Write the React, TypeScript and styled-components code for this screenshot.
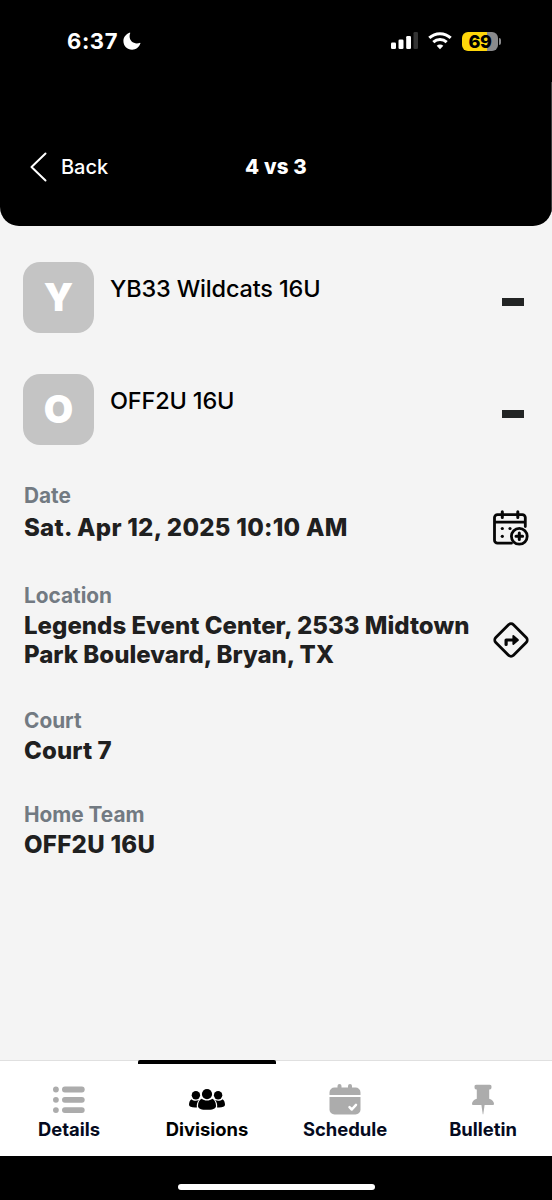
import React from "react";
import styled, { createGlobalStyle } from "styled-components";

const GlobalStyle = createGlobalStyle`
  * { box-sizing: border-box; }
  body { margin: 0; background: #f4f4f4; }
`;

const Screen = styled.div`
  width: 552px;
  height: 1200px;
  display: flex;
  flex-direction: column;
  background: #f4f4f4;
  overflow: hidden;
  font-family: Inter, "Liberation Sans", sans-serif;
  color: #000;
`;

const Header = styled.header`
  height: 226px;
  background: #000;
  color: #fff;
  border-radius: 0 0 19px 19px;
  overflow: hidden;
  display: flex;
  flex-direction: column;
`;

const StatusBar = styled.div`
  height: 82px;
  padding: 0 51px 0 67px;
  display: flex;
  align-items: center;
  justify-content: space-between;
`;

const StatusGroup = styled.div<{ $gap: number }>`
  display: flex;
  align-items: center;
  gap: ${(p) => p.$gap}px;
`;

const Clock = styled.span`
  font-size: 22px;
  font-weight: 700;
  line-height: 26px;
  letter-spacing: 0.6px;
`;

const Battery = styled.div`
  display: flex;
  align-items: center;
  gap: 1px;
`;

const BatteryBody = styled.div<{ $level: number }>`
  width: 36px;
  height: 19px;
  border-radius: 6px;
  background: linear-gradient(90deg, #ffd60a ${(p) => p.$level}%, #8a8a8c ${(p) => p.$level}%);
  color: #000;
  font-size: 18px;
  font-weight: 800;
  line-height: 19px;
  letter-spacing: -0.4px;
  text-align: center;
`;

const BatteryTip = styled.div`
  width: 2px;
  height: 7px;
  border-radius: 0 2px 2px 0;
  background: #8a8a8c;
`;

const NavBar = styled.nav`
  height: 144px;
  padding: 26px 28px 0 29px;
  border-right: 1px solid #3c3c3c;
  display: grid;
  grid-template-columns: 1fr auto 1fr;
  align-items: center;
`;

const BackButton = styled.button`
  display: flex;
  align-items: center;
  gap: 13px;
  padding: 0;
  border: 0;
  background: none;
  color: #fff;
  font: 500 20px/24px Inter, "Liberation Sans", sans-serif;
  letter-spacing: -0.05px;
`;

const NavTitle = styled.h1`
  margin: 0;
  font-size: 20.5px;
  font-weight: 800;
  line-height: 24px;
  letter-spacing: 0.15px;
`;

const Content = styled.main`
  flex: 1;
  padding: 36px 23px 0 24px;
`;

const TeamList = styled.div`
  display: flex;
  flex-direction: column;
  gap: 41px;
  margin-bottom: 38px;
`;

const TeamRow = styled.div`
  display: flex;
  align-items: flex-start;
  height: 71px;
`;

const Avatar = styled.div`
  width: 71px;
  height: 71px;
  margin-left: -1px;
  border-radius: 17px;
  background: #c4c4c4;
  color: #fff;
  font-size: 38px;
  font-weight: 900;
  line-height: 71px;
  text-align: center;
`;

const TeamName = styled.div`
  flex: 1;
  padding: 12px 0 0 16px;
  font-size: 23.5px;
  font-weight: 500;
  line-height: 29px;
  letter-spacing: -0.17px;
`;

const Score = styled.div`
  width: 22px;
  height: 8px;
  margin: 36px 5px 0 0;
  background: #222424;
`;

const Field = styled.section<{ $gap: number }>`
  margin-bottom: ${(p) => p.$gap}px;
`;

const FieldLabel = styled.div<{ $gap?: number }>`
  color: #727a82;
  font-size: 20.8px;
  font-weight: 700;
  line-height: 26px;
  margin-bottom: ${(p) => p.$gap ?? 2}px;
`;

const FieldRow = styled.div`
  display: flex;
  align-items: center;
  justify-content: space-between;

  svg {
    margin: -4px 0;
    overflow: visible;
  }
`;

const FieldValue = styled.div<{ $tracking?: number }>`
  color: #1f2020;
  font-size: 24px;
  font-weight: 800;
  line-height: 29.5px;
  letter-spacing: ${(p) => p.$tracking ?? 0}px;
  white-space: nowrap;
`;

const TabBar = styled.nav`
  height: 96px;
  display: grid;
  grid-template-columns: repeat(4, 1fr);
  background: #fff;
  border-top: 1px solid #e0e0e0;
`;

const Tab = styled.div<{ $active?: boolean }>`
  display: flex;
  flex-direction: column;
  align-items: center;
  margin-top: -1px;
  border-top: 4px solid ${(p) => (p.$active ? "#000" : "transparent")};
  border-radius: 2px;
  padding-top: 20px;
  color: ${(p) => (p.$active ? "#000" : "#acacac")};
`;

const TabLabel = styled.span<{ $active?: boolean }>`
  margin-top: 1px;
  color: ${(p) => (p.$active ? "#000" : "#050a1e")};
  font-size: 18.4px;
  font-weight: 700;
  line-height: 24px;
`;

const HomeArea = styled.footer`
  height: 44px;
  background: #000;
  display: flex;
  justify-content: center;
  padding-top: 27.5px;
`;

const HomeIndicator = styled.div`
  width: 197px;
  height: 6.5px;
  border-radius: 4px;
  background: #fff;
`;

const MoonIcon = () => (
  <svg width="18" height="18" viewBox="0 0 18 18">
    <path
      d="M6.6.7C6.9.4 7.4.7 7.2 1.2c-.4 1-.6 2-.6 3.1 0 4.2 3.2 7.1 7.2 7.1 1.100 0 2-.2 2.900-.5.500-.2.900.2.700.7C16.100 15.300 13 17.800 9.100 17.800 4.200 17.800.4 14 .4 9.100.4 5.200 3 1.900 6.600.7z"
      fill="#fff"
    />
  </svg>
);

const SignalIcon = () => (
  <svg width="27" height="18" viewBox="0 0 27 18" fill="#fff">
    <rect x="0" y="10.500" width="5" height="6.500" rx="1.300" />
    <rect x="7.500" y="7.500" width="5" height="9.500" rx="1.300" />
    <rect x="15.200" y="4" width="4.800" height="13" rx="1.300" />
    <rect x="22.500" y="0" width="4.500" height="17" rx="1.300" fill="#333" />
  </svg>
);

const WifiIcon = () => (
  <svg width="24" height="18" viewBox="0 0 24 18" fill="none" stroke="#fff" strokeWidth="3">
    <path d="M1.300 5.900C7.300.2 16.700.2 22.700 5.900" />
    <path d="M5.300 10.200c3.800-3.500 9.600-3.500 13.400 0" />
    <path d="M12 17.200 8.700 13.800c1.900-1.700 4.700-1.700 6.600 0z" fill="#fff" stroke="none" />
  </svg>
);

const ChevronIcon = () => (
  <svg width="19" height="30" viewBox="0 0 19 30" fill="none" stroke="#fff" strokeWidth="2" strokeLinecap="round" strokeLinejoin="round">
    <path d="M16.500 1.500 2.500 15l14 13.500" />
  </svg>
);

const CalendarAddIcon = () => (
  <svg width="36" height="36" viewBox="0 0 36 36" fill="none" stroke="#060606" strokeWidth="2.800" strokeLinecap="round">
    <path d="M32.300 16.500V7.600a3 3 0 0 0-3-3H4.500a3 3 0 0 0-3 3v22.600a3 3 0 0 0 3 3h14M1.500 12.200h30.800" />
    <path d="M9.300 1.700v5.800M24.800 1.700v5.800" strokeWidth="3" />
    <circle cx="26.300" cy="26.300" r="7.900" />
    <path d="M26.300 23v6.600M23 26.300h6.600" strokeWidth="3" />
    <g fill="#060606" stroke="none">
      <circle cx="9.300" cy="18.500" r="1.600" />
      <circle cx="17" cy="18.500" r="1.600" />
      <circle cx="9.300" cy="26.300" r="1.600" />
    </g>
  </svg>
);

const DirectionsIcon = () => (
  <svg width="36" height="36" viewBox="0 0 36 36">
    <rect x="5.500" y="5.500" width="25" height="25" rx="3.500" transform="rotate(45 18 18)" fill="none" stroke="#060606" strokeWidth="2.800" />
    <path d="M13.100 22.500v-4.500h7" fill="none" stroke="#060606" strokeWidth="3.200" strokeLinecap="round" strokeLinejoin="round" />
    <path d="M20.300 13.900v8.200l4.700-4.100z" fill="#060606" stroke="#060606" strokeWidth="1.800" strokeLinejoin="round" />
  </svg>
);

const ListIcon = () => (
  <svg width="32" height="32" viewBox="0 0 32 32" fill="currentColor">
    {[5.5, 15.8, 26.1].map((y) => (
      <g key={y}>
        <circle cx="2.900" cy={y} r="2.900" />
        <rect x="9" y={y - 2.9} width="22.700" height="5.800" rx="2.900" />
      </g>
    ))}
  </svg>
);

const PeopleIcon = () => (
  <svg width="36" height="32" viewBox="0 0 36 32" fill="currentColor">
    <circle cx="18" cy="10.100" r="5.100" />
    <circle cx="6.900" cy="11.200" r="4.200" />
    <circle cx="29.100" cy="11.200" r="4.200" />
    <path d="M12.700 14.800c1.400 1.200 3.200 1.800 5.300 1.800s3.900-.6 5.300-1.800c2.300 1 3.700 3.900 3.700 7.100 0 2.900-3.900 3.900-9 3.900s-9-1-9-3.900c0-3.200 1.400-6.100 3.700-7.100z" />
    <path d="M2.400 15.200c2 1.700 5.100 2 7.400.8-1.700 2.200-2.300 4.700-1.900 7.500-4.700.3-7.900-.4-7.900-2.700 0-2.300.8-4.700 2.400-5.600zM33.600 15.200c-2 1.700-5.100 2-7.400.8 1.700 2.200 2.300 4.700 1.900 7.500 4.700.3 7.900-.4 7.900-2.700 0-2.300-.8-4.700-2.400-5.600z" />
  </svg>
);

const CalendarCheckIcon = () => (
  <svg width="32" height="32" viewBox="0 0 32 32" fill="currentColor">
    <path d="M8.500 3.500V2a2 2 0 0 1 4 0v1.500H19V2a2 2 0 0 1 4 0v1.500h3.500a5 5 0 0 1 5 5V11H.5V8.500a5 5 0 0 1 5-5z" />
    <path d="M.5 13h31v12.500a5 5 0 0 1-5 5h-21a5 5 0 0 1-5-5z" />
    <path d="m20.500 23.200 2.300 2.300 4.200-4.600" fill="none" stroke="#fff" strokeWidth="2.500" strokeLinecap="round" strokeLinejoin="round" />
  </svg>
);

const PinIcon = () => (
  <svg width="22" height="32" viewBox="0 0 22 32" fill="currentColor">
    <path d="M4.200.8h13.600c1.300 0 1.700.8 1.700 2 0 1.800-.4 2.700-1.700 2.700h-.6v9.200c2.800.8 4.800 2.900 4.800 5 0 .9-.5 1.300-1.300 1.300H1.300C.5 21 0 20.600 0 19.700c0-2.100 2-4.200 4.800-5V5.500h-.6c-1.300 0-1.700-.9-1.700-2.700 0-1.200.4-2 1.700-2z" />
    <path d="M9.400 21h3.200L11.300 30q-.3.900-.6 0z" />
  </svg>
);

const teams = [
  { initial: "Y", name: "YB33 Wildcats 16U" },
  { initial: "O", name: "OFF2U 16U" },
];

const tabs = [
  { label: "Details", icon: <ListIcon /> },
  { label: "Divisions", icon: <PeopleIcon />, active: true },
  { label: "Schedule", icon: <CalendarCheckIcon /> },
  { label: "Bulletin", icon: <PinIcon /> },
];

export default function App() {
  return (
    <Screen>
      <GlobalStyle />
      <Header>
        <StatusBar>
          <StatusGroup $gap={5}>
            <Clock>6:37</Clock>
            <MoonIcon />
          </StatusGroup>
          <StatusGroup $gap={10}>
            <SignalIcon />
            <WifiIcon />
            <Battery>
              <BatteryBody $level={69}>69</BatteryBody>
              <BatteryTip />
            </Battery>
          </StatusGroup>
        </StatusBar>
        <NavBar>
          <BackButton>
            <ChevronIcon />
            Back
          </BackButton>
          <NavTitle>4 vs 3</NavTitle>
        </NavBar>
      </Header>
      <Content>
        <TeamList>
          {teams.map((t) => (
            <TeamRow key={t.name}>
              <Avatar>{t.initial}</Avatar>
              <TeamName>{t.name}</TeamName>
              <Score />
            </TeamRow>
          ))}
        </TeamList>
        <Field $gap={40}>
          <FieldLabel $gap={4}>Date</FieldLabel>
          <FieldRow>
            <FieldValue $tracking={0.26}>Sat. Apr 12, 2025 10:10 AM</FieldValue>
            <CalendarAddIcon />
          </FieldRow>
        </Field>
        <Field $gap={38}>
          <FieldLabel>Location</FieldLabel>
          <FieldRow>
            <FieldValue $tracking={0.02}>
              Legends Event Center, 2533 Midtown
              <br />
              Park Boulevard, Bryan, TX
            </FieldValue>
            <DirectionsIcon />
          </FieldRow>
        </Field>
        <Field $gap={37}>
          <FieldLabel>Court</FieldLabel>
          <FieldValue $tracking={0.1}>Court 7</FieldValue>
        </Field>
        <Field $gap={0}>
          <FieldLabel>Home Team</FieldLabel>
          <FieldValue $tracking={0.3}>OFF2U 16U</FieldValue>
        </Field>
      </Content>
      <TabBar>
        {tabs.map((t) => (
          <Tab key={t.label} $active={t.active}>
            {t.icon}
            <TabLabel $active={t.active}>{t.label}</TabLabel>
          </Tab>
        ))}
      </TabBar>
      <HomeArea>
        <HomeIndicator />
      </HomeArea>
    </Screen>
  );
}
